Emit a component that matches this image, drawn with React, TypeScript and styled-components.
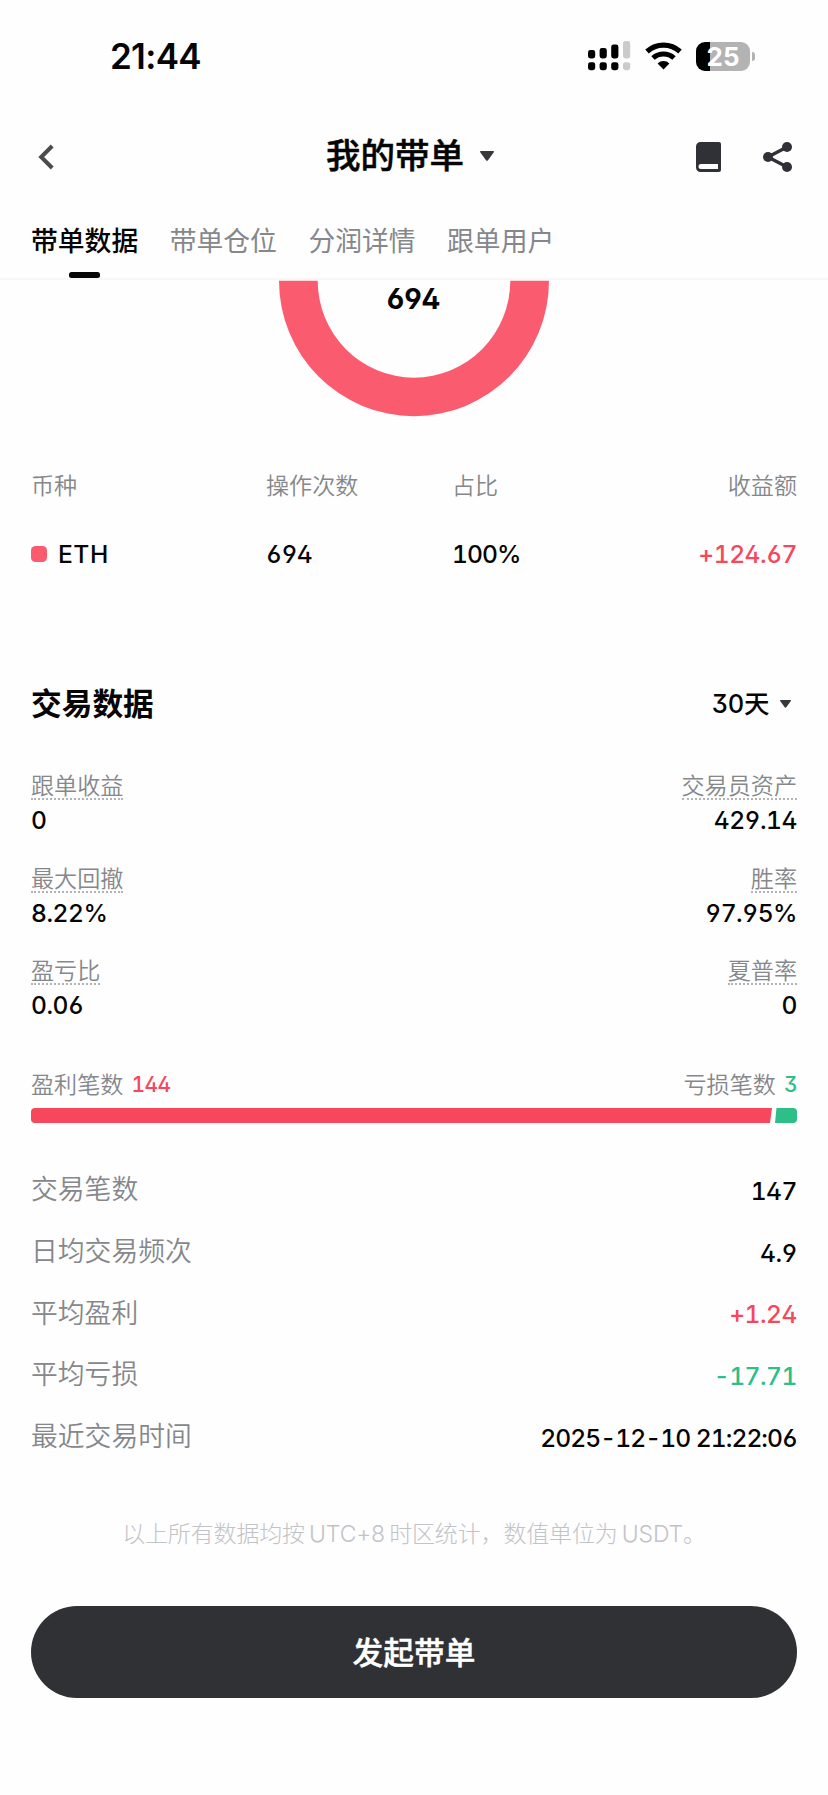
import React from 'react';
import styled, { createGlobalStyle } from 'styled-components';

const Global = createGlobalStyle`
  * { box-sizing: border-box; }
  body { margin: 0; background: #fefefe; color: #050505; font-family: Inter, "Noto Sans CJK SC", sans-serif; }
`;

const red = '#f6475d';
const green = '#2dbf88';

const Page = styled.main`width: 828px; height: 1795px; overflow: hidden; display: flex; flex-direction: column;`;
const StatusBar = styled.div`height: 112px; padding: 0 78px 0 110px; display: flex; align-items: center; justify-content: space-between;`;
const Clock = styled.div`font: 600 35px Inter, sans-serif; letter-spacing: -0.7px;`;
const StatusIcons = styled.div`display: flex; align-items: center; gap: 14px;`;
const Battery = styled.div`
  width: 54px; height: 29px; border-radius: 9px; position: relative; display: flex; align-items: center; justify-content: center;
  background: linear-gradient(90deg, #000 13.5px, #b3b3b3 13.5px); color: #fff; font: 700 26px Inter, sans-serif;
  &::after { content: ''; position: absolute; left: 56px; top: 10px; width: 3px; height: 9px; border-radius: 0 3px 3px 0; background: #b3b3b3; }
`;
const NavBar = styled.header`height: 88px; padding: 2px 36px 0 38px; display: grid; grid-template-columns: 1fr auto 1fr; align-items: center;`;
const Title = styled.h1`
  margin: 0 10px 2px 0; display: flex; align-items: center; gap: 16px; font-size: 34.5px; font-weight: 500; line-height: 44px; -webkit-text-stroke: 0.5px #050505;
`;
const Actions = styled.div`display: flex; justify-content: flex-end; align-items: center; gap: 42px;`;
const Tabs = styled.nav`height: 80px; padding: 0 31px; display: flex; gap: 31.5px; border-bottom: 2px solid #f7f7f7;`;
const Tab = styled.div<{ $active?: boolean }>`
  display: flex; flex-direction: column; align-items: center; justify-content: space-between; padding-top: 21px; font-size: 26.8px; line-height: 40px;
  color: ${p => (p.$active ? '#050505' : '#85878b')}; font-weight: ${p => (p.$active ? 500 : 400)};
  &::after { content: ''; width: 31px; height: 6px; border-radius: 2.5px; background: ${p => (p.$active ? '#050505' : 'transparent')}; }
`;
const RingArea = styled.section`height: 173px; display: grid; justify-items: center; align-items: start; & > * { grid-area: 1 / 1; }`;
const RingTotal = styled.div`padding-top: 1px; font-size: 28.5px; line-height: 36px; font-weight: 650; letter-spacing: 0.6px; font-feature-settings: "ss01";`;
const Table = styled.section`
  padding: 0 31px; display: grid; grid-template-columns: 235px 186px 1fr auto; grid-template-rows: 66px 69px; align-items: center; justify-items: start;
  & > :nth-child(4n) { justify-self: end; }
`;
const Label = styled.span`font-size: 23.1px; line-height: 32px; font-weight: 350; color: #85878b;`;
const Value = styled.span<{ $color?: string; $small?: boolean; $tight?: boolean }>`
  color: ${p => p.$color || '#050505'}; font-size: ${p => (p.$small ? 21 : 24.6)}px; line-height: 32px; font-weight: ${p => (p.$color ? 450 : 500)};
  letter-spacing: ${p => (p.$tight ? -0.95 : -0.5)}px; font-feature-settings: "ss01", "tnum", "calt" 0;
`;
const Coin = styled.span`display: flex; align-items: center; gap: 11px; ${Value} { letter-spacing: 0.5px; }`;
const Swatch = styled.i`width: 16px; height: 16px; border-radius: 4.5px; background: #fb5b6f;`;
const SectionHead = styled.div`margin-top: 94px; height: 44px; padding: 0 37px 0 31px; display: flex; align-items: center; justify-content: space-between;`;
const SectionTitle = styled.h2`margin: 0; font-size: 30.7px; line-height: 42px; font-weight: 700;`;
const Period = styled.div`display: flex; align-items: center; gap: 11px; ${Value} { font-size: 25.5px; letter-spacing: -0.4px; }`;
const Stats = styled.section`margin-top: 44px; padding: 0 31px; display: flex; flex-direction: column;`;
const StatRow = styled.div`height: 92.5px; display: flex; justify-content: space-between;`;
const Stat = styled.div<{ $end?: boolean }>`display: flex; flex-direction: column; align-items: ${p => (p.$end ? 'flex-end' : 'flex-start')}; gap: 4px;`;
const Hint = styled(Label)`height: 30px; border-bottom: 2px dotted #b2b3b6;`;
const CountRow = styled.div`height: 32px; margin-top: 21px; padding: 0 31px; display: flex; justify-content: space-between;`;
const Count = styled.div`display: flex; align-items: center; gap: 8px;`;
const Bar = styled.div`margin: 7.5px 31px 0; height: 15px; display: flex; border-radius: 4px; overflow: hidden;`;
const WinPart = styled.div`flex: 1; background: ${red}; clip-path: polygon(0 0, 100% 0, calc(100% - 2px) 100%, 0 100%);`;
const LossPart = styled.div`width: 22px; margin-left: 3px; background: ${green}; clip-path: polygon(1.5px 0, 100% 0, 100% 100%, 0 100%);`;
const List = styled.section`margin-top: 35.5px; padding: 0 31px;`;
const ListRow = styled.div`height: 61.7px; display: flex; justify-content: space-between; align-items: center; & > ${Value} { padding-top: 3px; }`;
const ListLabel = styled(Label)`font-size: 26.8px;`;
const Note = styled.p`
  margin: 51px 0 0; text-align: center; font: 300 23px/32px Inter, "Noto Sans CJK SC", sans-serif;
  letter-spacing: -0.15px; word-spacing: -2.2px; color: #c2c3c6;
`;
const Submit = styled.button`
  margin: 56.5px 31px 0; height: 92px; padding: 0 0 3px; border: 0; border-radius: 46px; background: #303135; color: #fff;
  font: 500 30.7px "Noto Sans CJK SC", sans-serif; -webkit-text-stroke: 0.4px #fff;
`;

const Caret = ({ w, h }: { w: number; h: number }) => (
  <svg width={w} height={h} viewBox="0 0 14 10"><path d="M.8 0h12.4c.7 0 1 .8.6 1.3L8 9.2a1.3 1.3 0 0 1-2 0L.2 1.3C-.2.8.1 0 .8 0Z" fill="#37383b" /></svg>
);

const Signal = () => (
  <svg width="43" height="30" viewBox="0 0 43 30">
    {[[0, 9], [11.6, 7], [23.2, 3.5], [35, 0]].map(([x, y], i) => (
      <g key={x} fill={i === 3 ? '#cbcbcb' : '#000'}>
        <rect x={x} y={y} width="7.2" height={17.5 - y} rx="2.4" />
        <rect x={x} y="21.2" width="7.2" height="8" rx="2.4" />
      </g>
    ))}
  </svg>
);

const Wifi = () => (
  <svg width="37" height="28" viewBox="0 0 37 28">
    <path d="M2 9.5a24.5 24.5 0 0 1 33 0" fill="none" stroke="#000" strokeWidth="5.2" />
    <path d="M8 16a15.8 15.8 0 0 1 21 0" fill="none" stroke="#000" strokeWidth="5" />
    <path d="M12.6 21.4a8.6 8.6 0 0 1 11.8 0L18.5 27.5Z" fill="#000" />
  </svg>
);

const BackIcon = () => (
  <svg width="18" height="28" viewBox="0 0 18 28"><path d="M14.2 3 3.2 14l11 11" fill="none" stroke="#4a4b4e" strokeWidth="4" /></svg>
);

const BookIcon = () => (
  <svg width="25" height="30" viewBox="0 0 25 30">
    <path fillRule="evenodd" d="M4.5 0H23a2 2 0 0 1 2 2v26a2 2 0 0 1-2 2H4.5A4.5 4.5 0 0 1 0 25.5v-21A4.5 4.5 0 0 1 4.5 0ZM5 22a2.5 2.5 0 0 0 0 5H22V22Z" fill="#303136" />
  </svg>
);

const ShareIcon = () => (
  <svg width="29" height="30" viewBox="0 0 29 30" fill="#303136">
    <path d="M24 5 5 15l19 10" fill="none" stroke="#303136" strokeWidth="3.4" />
    <circle cx="5" cy="15" r="5" /><circle cx="24" cy="5" r="5" /><circle cx="24" cy="25" r="5" />
  </svg>
);

const rows: { label: string; value: string; color?: string; tight?: boolean }[] = [
  { label: '交易笔数', value: '147' },
  { label: '日均交易频次', value: '4.9' },
  { label: '平均盈利', value: '+1.24', color: red },
  { label: '平均亏损', value: '-17.71', color: green },
  { label: '最近交易时间', value: '2025-12-10 21:22:06', tight: true },
];

const stats = [
  ['跟单收益', '0', '交易员资产', '429.14'],
  ['最大回撤', '8.22%', '胜率', '97.95%'],
  ['盈亏比', '0.06', '夏普率', '0'],
];

export default function App() {
  return (
    <Page>
      <Global />
      <StatusBar>
        <Clock>21:44</Clock>
        <StatusIcons><Signal /><Wifi /><Battery>25</Battery></StatusIcons>
      </StatusBar>
      <NavBar>
        <BackIcon />
        <Title>我的带单<Caret w={14} h={10} /></Title>
        <Actions><BookIcon /><ShareIcon /></Actions>
      </NavBar>
      <Tabs>
        <Tab $active>带单数据</Tab><Tab>带单仓位</Tab><Tab>分润详情</Tab><Tab>跟单用户</Tab>
      </Tabs>
      <RingArea>
        <svg width="270" height="137" viewBox="0 0 270 137"><path d="M0 .7a135 135.5 0 0 0 270 0h-38.7a96.3 97 0 0 1-192.6 0Z" fill="#fb5b6f" /></svg>
        <RingTotal>694</RingTotal>
      </RingArea>
      <Table>
        <Label>币种</Label><Label>操作次数</Label><Label>占比</Label><Label>收益额</Label>
        <Coin><Swatch /><Value>ETH</Value></Coin><Value>694</Value><Value $tight>100%</Value><Value $color={red}>+124.67</Value>
      </Table>
      <SectionHead>
        <SectionTitle>交易数据</SectionTitle>
        <Period><Value>30天</Value><Caret w={11} h={8} /></Period>
      </SectionHead>
      <Stats>
        {stats.map(([a, b, c, d]) => (
          <StatRow key={a}>
            <Stat><Hint>{a}</Hint><Value>{b}</Value></Stat>
            <Stat $end><Hint>{c}</Hint><Value>{d}</Value></Stat>
          </StatRow>
        ))}
      </Stats>
      <CountRow>
        <Count><Label>盈利笔数</Label><Value $color={red} $small>144</Value></Count>
        <Count><Label>亏损笔数</Label><Value $color={green} $small>3</Value></Count>
      </CountRow>
      <Bar><WinPart /><LossPart /></Bar>
      <List>
        {rows.map(({ label, value, color, tight }) => (
          <ListRow key={label}><ListLabel>{label}</ListLabel><Value $color={color} $tight={tight}>{value}</Value></ListRow>
        ))}
      </List>
      <Note>以上所有数据均按 UTC+8 时区统计，数值单位为 USDT。</Note>
      <Submit>发起带单</Submit>
    </Page>
  );
}
